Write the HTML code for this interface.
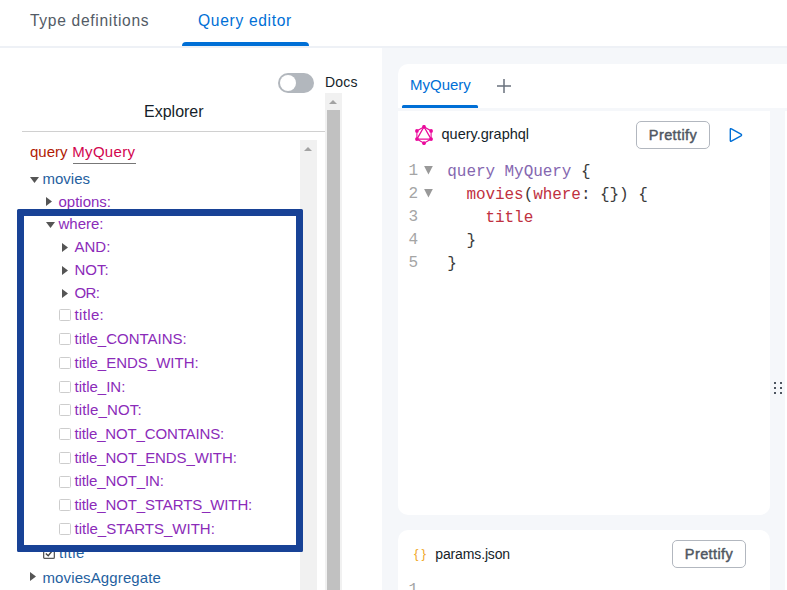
<!DOCTYPE html>
<html lang="en">
<head>
<meta charset="utf-8">
<title>Query editor</title>
<style>
*{box-sizing:border-box;margin:0;padding:0}
html,body{width:787px;height:590px;overflow:hidden;background:#f5f7fa;font-family:"Liberation Sans",sans-serif;color:#151e29}
.abs{position:absolute}
#top{left:0;top:0;width:787px;height:46px;background:#fff}
#topline{left:0;top:46px;width:787px;height:2px;background:#eef1f6}
.toptab{top:10.6px;font-size:15.6px;line-height:20px;letter-spacing:.68px;white-space:nowrap;color:#535b66}
#tab1{left:30px}
#tab2{left:198px;color:#006fd6}
#tabline{left:182px;top:42px;width:127px;height:4px;background:#006fd6;border-radius:4px 4px 0 0}
#left{left:0;top:48px;width:382px;height:542px;background:#fff}
#toggle{left:278px;top:73px;width:36px;height:20px;border-radius:10px;background:#b2b7bd}
#knob{left:280px;top:75px;width:16px;height:16px;border-radius:8px;background:#fff}
#docs{left:325px;top:73px;font-size:14px;line-height:18px;letter-spacing:.2px;color:#151e29}
#explorer{left:144px;top:102px;font-size:16px;line-height:20px;color:#151e29;white-space:nowrap}
#exline{left:22px;top:131px;width:303px;height:1px;background:#d0d0d0}
#sb1{left:325px;top:93px;width:17px;height:497px;background:#f1f1f1}
#sb1t{left:327px;top:110px;width:13px;height:480px;background:#c1c1c1}
#sb2{left:300px;top:140px;width:17px;height:450px;background:#f1f1f1}
.sarrow{width:0;height:0;border-left:4px solid transparent;border-right:4px solid transparent;border-bottom:4px solid #a3a3a3}
.row{left:0;font-size:15px;line-height:20px;white-space:nowrap;height:20px}
.kw{color:#b11a04}.def{color:#d2054e}.prop{color:#1f61a0}.attr{color:#8b2bb9}
.tri-d{width:0;height:0;border-left:4.5px solid transparent;border-right:4.5px solid transparent;border-top:6px solid #555}
.tri-r{width:0;height:0;border-top:4.5px solid transparent;border-bottom:4.5px solid transparent;border-left:6px solid #555}
.cb{width:12px;height:12px;border:1px solid #cdcdcd;border-radius:1.5px;background:#fff}
#bluebox{left:17px;top:209px;width:286px;height:343px;border:7px solid #184296;border-radius:1.5px}
.card{background:#fff}
#tabs{left:398px;top:64px;width:389px;height:44px;border-radius:10px 0 0 0}
#mq{left:410px;top:75px;font-size:15px;line-height:20px;color:#006fd6;white-space:nowrap}
#mqline{left:402px;top:105.4px;width:76px;height:2.8px;background:#006fd6;border-radius:1.5px 1.5px 0 0}
#ed{left:398px;top:111px;width:372px;height:404px;border-radius:0 0 10px 10px}
#far{left:785px;top:111px;width:2px;height:479px}
#params{left:398px;top:530px;width:372px;height:60px;border-radius:10px 10px 0 0}
.fname{font-size:14.5px;line-height:20px;color:#151e29;white-space:nowrap}
.btn{width:74px;height:28px;border:1px solid #b2b7bf;border-radius:5px;background:#fff;font-size:14.5px;color:#4f5761;-webkit-text-stroke:.45px #4f5761;text-align:center;line-height:26px;letter-spacing:.4px;white-space:nowrap}
.code{font-family:"Liberation Mono",monospace;font-size:16px;letter-spacing:-.06px;line-height:23px;white-space:pre;height:23px}
.ln{color:#a5a5a5;font-family:"Liberation Mono",monospace;font-size:16px;line-height:23px}
.c1{color:#8567b0}.c2{color:#c0313f}.c3{color:#3a3a3a}
.dot{width:2px;height:2px;background:#4d5560}
</style>
</head>
<body>
<div class="abs" id="top"></div>
<div class="abs" id="topline"></div>
<div class="abs toptab" id="tab1">Type definitions</div>
<div class="abs toptab" id="tab2">Query editor</div>
<div class="abs" id="tabline"></div>

<div class="abs" id="left"></div>
<div class="abs" id="toggle"></div><div class="abs" id="knob"></div>
<div class="abs" id="docs">Docs</div>
<div class="abs" id="explorer">Explorer</div>
<div class="abs" id="exline"></div>
<div class="abs" id="sb1"></div><div class="abs" id="sb1t"></div>
<div class="abs sarrow" style="left:329.2px;top:100px"></div>
<div class="abs" id="sb2"></div>
<div class="abs sarrow" style="left:304.2px;top:147px"></div>

<div class="abs row" id="r0" style="left:30px;top:142px"><span class="kw">query</span> <span class="def" id="r0n" style="letter-spacing:.3px;margin-left:.6px">MyQuery</span></div>
<div class="abs" style="left:73px;top:163px;width:63px;height:1px;background:#777"></div>

<svg class="abs" style="left:30.0px;top:177.0px" width="9" height="6" viewBox="0 0 9 6"><path d="M0 0H9L4.5 6Z" fill="#555"/></svg>
<div class="abs row prop" id="r1" style="left:42.5px;top:169px">movies</div>
<svg class="abs" style="left:46.0px;top:197.0px" width="6" height="9" viewBox="0 0 6 9"><path d="M0 0V9L6 4.5Z" fill="#555"/></svg>
<div class="abs row attr" id="r2" style="left:58.5px;top:192px">options:</div>
<svg class="abs" style="left:46.0px;top:222.0px" width="9" height="6" viewBox="0 0 9 6"><path d="M0 0H9L4.5 6Z" fill="#555"/></svg>
<div class="abs row attr" id="r3" style="left:58.5px;top:214px">where:</div>
<svg class="abs" style="left:62.0px;top:242.5px" width="6" height="9" viewBox="0 0 6 9"><path d="M0 0V9L6 4.5Z" fill="#555"/></svg>
<div class="abs row attr" id="r4" style="left:74.5px;top:237px">AND:</div>
<svg class="abs" style="left:62.0px;top:265.5px" width="6" height="9" viewBox="0 0 6 9"><path d="M0 0V9L6 4.5Z" fill="#555"/></svg>
<div class="abs row attr" id="r5" style="left:74.5px;top:260px">NOT:</div>
<svg class="abs" style="left:62.0px;top:288.5px" width="6" height="9" viewBox="0 0 6 9"><path d="M0 0V9L6 4.5Z" fill="#555"/></svg>
<div class="abs row attr" id="r6" style="left:74.5px;top:283px;letter-spacing:-0.6px">OR:</div>

<div class="abs cb" style="left:59px;top:309px"></div>
<div class="abs row attr" id="r7" style="left:74.5px;top:305px;letter-spacing:0.35px">title:</div>
<div class="abs cb" style="left:59px;top:333px"></div>
<div class="abs row attr" id="r8" style="left:74.5px;top:329px">title_CONTAINS:</div>
<div class="abs cb" style="left:59px;top:357px"></div>
<div class="abs row attr" id="r9" style="left:74.5px;top:353px">title_ENDS_WITH:</div>
<div class="abs cb" style="left:59px;top:381px"></div>
<div class="abs row attr" id="r10" style="left:74.5px;top:377px">title_IN:</div>
<div class="abs cb" style="left:59px;top:404px"></div>
<div class="abs row attr" id="r11" style="left:74.5px;top:400px;letter-spacing:0.14px">title_NOT:</div>
<div class="abs cb" style="left:59px;top:428px"></div>
<div class="abs row attr" id="r12" style="left:74.5px;top:424px;letter-spacing:-0.14px">title_NOT_CONTAINS:</div>
<div class="abs cb" style="left:59px;top:452px"></div>
<div class="abs row attr" id="r13" style="left:74.5px;top:448px;letter-spacing:-0.1px">title_NOT_ENDS_WITH:</div>
<div class="abs cb" style="left:59px;top:476px"></div>
<div class="abs row attr" id="r14" style="left:74.5px;top:471px;letter-spacing:-0.12px">title_NOT_IN:</div>
<div class="abs cb" style="left:59px;top:499px"></div>
<div class="abs row attr" id="r15" style="left:74.5px;top:495px;letter-spacing:-0.12px">title_NOT_STARTS_WITH:</div>
<div class="abs cb" style="left:59px;top:523px"></div>
<div class="abs row attr" id="r16" style="left:74.5px;top:519px">title_STARTS_WITH:</div>

<svg class="abs" style="left:43px;top:546.5px" width="12" height="12" viewBox="0 0 12 12"><rect x=".65" y=".65" width="10.7" height="10.7" rx="1.2" fill="#fff" stroke="#5a5a5a" stroke-width="1.3"/><path d="M2.8 6.6 5.2 8.8 9.4 3.6" fill="none" stroke="#444" stroke-width="1.4"/></svg>
<div class="abs row prop" id="r17" style="left:59px;top:543px;letter-spacing:.5px">title</div>
<svg class="abs" style="left:30.0px;top:572.0px" width="6" height="9" viewBox="0 0 6 9"><path d="M0 0V9L6 4.5Z" fill="#555"/></svg>
<div class="abs row prop" id="r18" style="left:42.5px;top:568px;letter-spacing:.12px">moviesAggregate</div>

<div class="abs" id="bluebox"></div>

<div class="abs card" id="tabs"></div>
<div class="abs" id="mq">MyQuery</div>
<div class="abs" id="mqline"></div>
<svg class="abs" style="left:496px;top:78px" width="16" height="16" viewBox="0 0 16 16"><path d="M8 1v14M1 8h14" stroke="#6a727d" stroke-width="1.5" fill="none"/></svg>

<div class="abs card" id="ed"></div>
<div class="abs card" id="far"></div>
<svg class="abs" id="gql" style="left:413.9px;top:125px" width="20" height="20" viewBox="0 0 20 20" fill="none" stroke="#ea0a9b" stroke-width="1.1">
<path d="M10.00 1.80 17.10 5.90 17.10 14.10 10.00 18.20 2.90 14.10 2.90 5.90Z"/><path d="M10.00 1.80 17.10 14.10 2.90 14.10Z" stroke-width="1.3"/>
<g fill="#ea0a9b" stroke="none"><circle cx="10.00" cy="1.80" r="1.85"/><circle cx="17.10" cy="5.90" r="1.85"/><circle cx="17.10" cy="14.10" r="1.85"/><circle cx="10.00" cy="18.20" r="1.85"/><circle cx="2.90" cy="14.10" r="1.85"/><circle cx="2.90" cy="5.90" r="1.85"/></g></svg>
<div class="abs fname" id="fn1" style="left:441.5px;top:124px">query.graphql</div>
<div class="abs btn" id="b1" style="left:636px;top:121px">Prettify</div>
<svg class="abs" style="left:728px;top:126px" width="16" height="18" viewBox="0 0 16 18"><path d="M2.3 3.4Q2.3 2.2 3.4 2.8L13 8.2Q14.2 9 13 9.8L3.4 15.2Q2.3 15.8 2.3 14.6Z" fill="none" stroke="#006fd6" stroke-width="1.4" stroke-linejoin="round"/></svg>

<div class="abs ln" style="left:408.6px;top:159.5px">1</div>
<div class="abs ln" style="left:408.6px;top:182.5px">2</div>
<div class="abs ln" style="left:408.6px;top:205.5px">3</div>
<div class="abs ln" style="left:408.6px;top:228.5px">4</div>
<div class="abs ln" style="left:408.6px;top:251.5px">5</div>
<svg class="abs" style="left:424px;top:166.4px" width="9" height="9" viewBox="0 0 9 9"><path d="M0.1 0H8.8L4.45 8.4Z" fill="#999"/></svg>
<svg class="abs" style="left:424px;top:189.4px" width="9" height="9" viewBox="0 0 9 9"><path d="M0.1 0H8.8L4.45 8.4Z" fill="#999"/></svg>
<div class="abs code" id="c1" style="left:447.3px;top:160.5px"><span class="c1">query MyQuery</span> <span class="c3">{</span></div>
<div class="abs code" id="c2" style="left:447.3px;top:183.5px">  <span class="c2">movies</span><span class="c3">(</span><span class="c2">where</span><span class="c3">: {}) {</span></div>
<div class="abs code" id="c3" style="left:447.3px;top:206.5px">    <span class="c2">title</span></div>
<div class="abs code c3" id="c4" style="left:447.3px;top:229.5px">  }</div>
<div class="abs code c3" id="c5" style="left:447.3px;top:252.5px">}</div>

<div class="abs dot" style="left:774px;top:382px"></div><div class="abs dot" style="left:780px;top:382px"></div>
<div class="abs dot" style="left:774px;top:387px"></div><div class="abs dot" style="left:780px;top:387px"></div>
<div class="abs dot" style="left:774px;top:392px"></div><div class="abs dot" style="left:780px;top:392px"></div>

<div class="abs card" id="params"></div>
<div class="abs" id="braces" style="left:414px;top:543.5px;font-size:13.5px;line-height:20px;color:#f0a92e;white-space:nowrap;letter-spacing:3px">{}</div>
<div class="abs fname" id="fn2" style="left:435.3px;top:543.5px;font-size:14px;letter-spacing:-.14px">params.json</div>
<div class="abs btn" id="b2" style="left:672px;top:540px">Prettify</div>
<div class="abs ln" style="left:408.6px;top:578.5px">1</div>
</body>
</html>
